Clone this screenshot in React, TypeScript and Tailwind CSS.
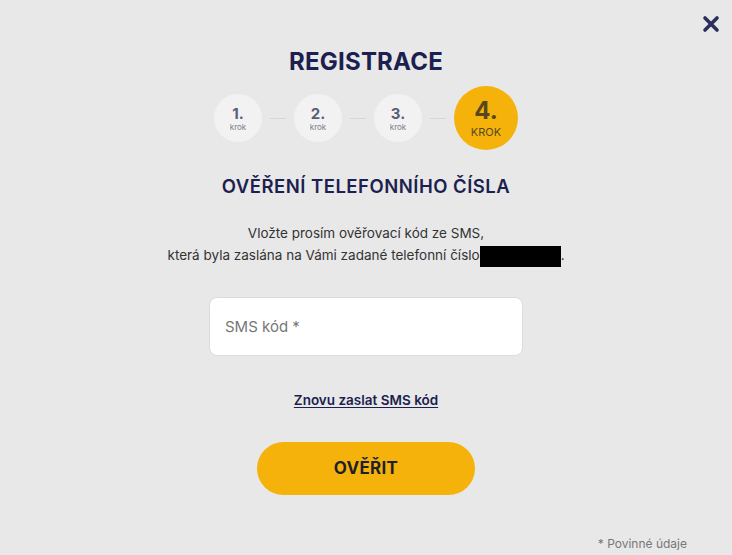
import React from "react";

const steps = [1, 2, 3];

const App = () => {
  return (
    <div className="relative h-[555px] w-full bg-[#e8e8e8] font-['Inter','Noto_Sans',sans-serif] flex flex-col items-center overflow-hidden">
      <button className="absolute right-[12px] top-[15px] text-[#2b2f5c]" aria-label="close">
        <svg width="18" height="18" viewBox="0 0 18 18">
          <path d="M3 3 L15 15 M15 3 L3 15" stroke="currentColor" strokeWidth="3.6" strokeLinecap="round" />
        </svg>
      </button>

      <h1 className="mt-[46px] text-[24px] leading-[32px] font-bold tracking-[0.2px] text-[#1c1f4f]">
        REGISTRACE
      </h1>

      <div className="mt-[8px] flex items-center">
        {steps.map((n) => (
          <React.Fragment key={n}>
            <div className="w-[48px] h-[48px] rounded-full bg-[#f2f2f2] flex flex-col items-center justify-center">
              <span className="text-[15px] leading-[17px] font-bold text-[#5b5e78]">{n}.</span>
              <span className="text-[8px] leading-[10px] text-[#7a7c8c]">krok</span>
            </div>
            <div className="mx-[8px] w-[16px] h-[1px] bg-[#d6d6d6]" />
          </React.Fragment>
        ))}
        <div className="w-[64px] h-[64px] rounded-full bg-[#f5b20b] flex flex-col items-center justify-center">
          <span className="text-[24px] leading-[28px] font-bold text-[#56481c]">4.</span>
          <span className="text-[11px] leading-[14px] text-[#5a4a1f]">KROK</span>
        </div>
      </div>

      <h2 className="mt-[24px] text-[18.5px] leading-[24px] font-semibold tracking-[0.5px] text-[#1c1f4f]">
        OVĚŘENÍ TELEFONNÍHO ČÍSLA
      </h2>

      <p className="mt-[24px] text-center text-[13.5px] leading-[22px] text-[#333333]">
        Vložte prosím ověřovací kód ze SMS,
        <br />
        která byla zaslána na Vámi zadané telefonní číslo
        <span className="inline-block align-middle w-[81px] h-[21px] bg-black" />.
      </p>

      <input
        className="mt-[30px] w-[314px] h-[59px] rounded-[8px] border border-[#dcdcdc] bg-white px-[15px] text-[15px] text-[#333] placeholder:text-[#777777] outline-none"
        placeholder="SMS kód *"
      />

      <a href="#" className="mt-[34px] text-[13.5px] leading-[20px] font-semibold text-[#1c1f4f] underline underline-offset-2">
        Znovu zaslat SMS kód
      </a>

      <button className="mt-[32px] w-[218px] h-[53px] rounded-full bg-[#f5b20b] text-[17px] font-bold tracking-[0.3px] text-[#1f1f2c]">
        OVĚŘIT
      </button>

      <div className="mt-auto mb-[3px] self-end mr-[45px] text-[12px] leading-[16px] text-[#777777]">
        * Povinné údaje
      </div>
    </div>
  );
};

export default App;
